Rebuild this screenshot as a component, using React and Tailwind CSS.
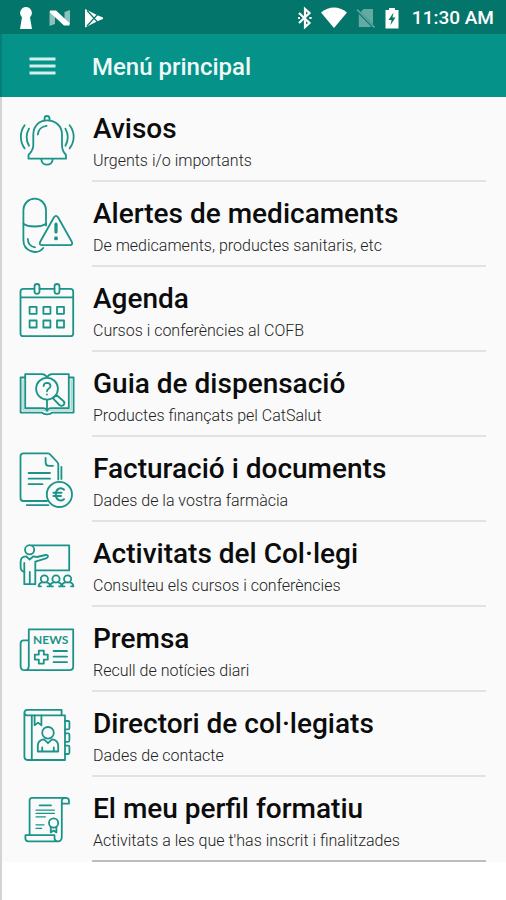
import React from 'react';

const Icon = ({ children }) => (
    <svg
        className="w-15 h-15 shrink-0 text-[#1a9488]"
        viewBox="0 0 60 60"
        fill="none"
        stroke="currentColor"
        strokeWidth="1.8"
        strokeLinecap="round"
        strokeLinejoin="round"
        aria-hidden="true"
    >
        {children}
    </svg>
);

const BellIcon = () => (
    <Icon>
        <path d="M27.5 10.6 V8.5 A2.5 2.5 0 0 1 32.5 8.5 V10.6" />
        <path d="M11.5 48.7 V45 C14 42.5 16.3 39.5 16.3 35 V24.5 C16.3 16 22 10.4 30.2 10.4 C38.5 10.4 45 16 45 24.5 V35 C45 39.5 46.5 42.5 49 45 V48.7 Z" />
        <path d="M24.3 49 C24.3 56.5 35.7 56.5 35.7 49" />
        <path d="M20.8 24.5 C21.2 20 24.6 16.4 29.6 15.9" />
        <path d="M7.6 15.2 C2.6 22 2.6 31.5 7.6 38.4 M12 18.6 C9 24 9 30.5 12 35.8" />
        <path d="M52.6 15.2 C58 22 58 31.5 52.6 38.4 M48.4 18.6 C51.4 24 51.4 30.5 48.4 35.8" />
    </Icon>
);

const PillIcon = () => (
    <Icon>
        <path d="M29 30.5 V15 A11.3 11.3 0 0 0 6.4 15 V45 C6.4 56.5 20 60.5 26.3 53" />
        <path d="M6.4 28.8 C11 32.4 24 32.4 29 28.8" />
        <path d="M10.8 44 C11 48.5 13.8 51.6 18 52.4" />
        <path d="M37 22.3 Q39 19.5 41 22.3 L54.8 46.8 Q56 50 53 50.1 H24.8 Q21.8 50 23.2 46.8 Z" />
        <path d="M39 29.2 V37" strokeWidth="3.2" />
        <path d="M39 43.2 V43.4" strokeWidth="3.8" />
    </Icon>
);

const CalendarIcon = () => (
    <Icon>
        <path d="M17.3 8.8 H6.3 Q3.5 8.8 3.5 11.6 V53.4 Q3.5 56.2 6.3 56.2 H53.4 Q56.2 56.2 56.2 53.4 V11.6 Q56.2 8.8 53.4 8.8 H42.7 M22.5 8.8 H37.5 M3.5 17.4 H56.2" />
        <rect x="17.5" y="4" width="5" height="9.8" rx="2.5" />
        <rect x="37.5" y="4" width="5" height="9.8" rx="2.5" />
        <path d="M12.6 26.8 h7 v7 h-7 z M26.4 26.8 h7 v7 h-7 z M40 26.8 h7 v7 h-7 z M12.6 40.5 h7 v7 h-7 z M26.4 40.5 h7 v7 h-7 z M40 40.5 h7 v7 h-7 z" />
    </Icon>
);

const BookSearchIcon = () => (
    <Icon>
        <path d="M8 12.5 H3.6 V47.6 H25 Q26.5 49.3 30 49.3 Q33.5 49.3 35 47.6 H56.6 V12.5 H52" />
        <path d="M6 15 V45 H26.5 L30 46.8 L33.5 45 H54.2 V15" strokeWidth="1" opacity="0.5" />
        <path d="M30 12.2 Q28 9.2 25 9.2 H8.2 V43.2 H26 Q29 43.2 30 45.5 Q31 43.2 34 43.2 H51.8 V9.2 H35 Q32 9.2 30 12.2" />
        <path d="M30 35 V45" />
        <circle cx="30" cy="23.7" r="10.9" fill="#fafafa" />
        <path d="M26.6 21 Q26.8 17.8 30.2 17.8 Q33.6 18 33.5 21 Q33.3 23 31.3 24 Q30 24.8 30 26.3 M30 29.3 V29.5" />
        <path d="M36 33.4 L39.4 30 L46.4 36 Q48.4 38 46.6 40 Q44.6 41.8 42.4 40 Z" fill="#fafafa" />
    </Icon>
);

const InvoiceIcon = () => (
    <Icon>
        <path d="M30 51 H6.5 Q3.5 51 3.5 48 V6.3 Q3.5 3.4 6.5 3.4 H31 Q32.3 3.4 33.3 4.6 L40.2 12 Q41.3 13.2 41.3 14.7 V29.5" />
        <path d="M28.6 7.8 V12.5 Q28.6 15.8 32 15.8 H36" />
        <path d="M11.6 23 H33 M11.6 28.7 H33 M11.6 34.2 H25.5" />
        <path d="M44.4 17 V29 M9.8 55.1 H31.5" />
        <circle cx="42.4" cy="44.4" r="12.6" />
        <path d="M47 39.6 C43 36.5 38.8 39.3 38.8 44.4 C38.8 49.5 43 52.3 47 49.2 M36.4 42.8 H44.5 M36.4 46 H44" strokeWidth="2" />
    </Icon>
);

const TeacherIcon = () => (
    <Icon>
        <path d="M15 10.4 H52.2 V35.3 H18.6" />
        <circle cx="12.6" cy="14.8" r="4.6" />
        <path d="M7.3 49.2 V37 Q3.6 36 3.6 32 V27 Q3.6 21.3 9 21.3 L12.7 24.5 L16.5 21.3 L20 22 L28.5 20 Q31 19.8 31 21.3 Q31 22.7 29 23.3 L18.3 26.6 V49.2 Z" />
        <path d="M12.8 37 V49 M7.3 28 V37" />
        <circle cx="27.4" cy="43.9" r="3.6" />
        <circle cx="39" cy="43.9" r="3.6" />
        <circle cx="50.6" cy="43.9" r="3.6" />
        <path d="M21.6 51.3 Q21.8 48 25.5 47.4 M29.3 47.4 Q33 48 33.2 51.3 Q33.4 48 37.1 47.4 M40.9 47.4 Q44.6 48 44.8 51.3 Q45 48 48.7 47.4 M52.5 47.4 Q56.2 48 56.4 51.3 M21.6 51.3 H24 M30.5 51.3 H36 M42 51.3 H47.5 M54 51.3 H56.4" />
    </Icon>
);

const NewsIcon = () => (
    <Icon>
        <path d="M11.8 20.4 H6.8 Q3.6 20.4 3.6 23.6 V46.2 Q3.6 50.2 7.7 50.2 H52.5 Q56.2 50.2 56.2 46.5 V9.4 H11.8 V46.2 Q11.8 50.2 7.7 50.2" />
        <text
            x="16"
            y="24"
            className="font-['Lato',sans-serif] text-[12px] font-bold"
            fill="currentColor"
            stroke="none"
        >
            NEWS
        </text>
        <path d="M21.8 30.6 h5 v4 h4 v5 h-4 v4 h-5 v-4 h-4 v-5 h4 z" />
        <path d="M36.6 31 H50 M36.6 36.7 H50 M36.6 42.2 H50" />
    </Icon>
);

const ContactsIcon = () => (
    <Icon>
        <path d="M44.6 10.2 V4.8 H10.5 Q7.4 4.8 7.4 8 V51.8 Q7.4 55 10.5 55 H48 V10.4 H10 Q7.6 10.2 7.6 8" />
        <path d="M14.8 10.4 V55" />
        <path d="M17.6 10.4 V20.2 L21 17.6 L24.4 20.2 V10.4" />
        <path d="M48 16 h3.2 q1.2 0 1.2 1.2 v6 q0 1.2 -1.2 1.2 h-3.2 M48 28.4 h3.2 q1.2 0 1.2 1.2 v6 q0 1.2 -1.2 1.2 h-3.2 M48 40.6 h3.2 q1.2 0 1.2 1.2 v6 q0 1.2 -1.2 1.2 h-3.2" />
        <circle cx="31" cy="27.8" r="5.8" />
        <path d="M20.8 46.5 V41 Q20.8 35 27 34.4 L31 38.2 L35 34.4 Q41.2 35 41.2 41 V46.5 Z M25.2 46 V42.5 M36.8 46 V42.5" />
    </Icon>
);

const DiplomaIcon = () => (
    <Icon>
        <path d="M12.6 45 V10.4 Q12.6 7.8 15.2 7.8 H48.5 Q52 7.8 52 11 V13.6 H44.8 V46.5 Q44.8 51.4 41 51.4 H11.5 Q8.4 51.4 8.4 48.2 V45.2 H37.5 V47.5 Q37.5 51.2 41 51.4" />
        <path d="M44.8 13.6 V10.5 Q45 8 48 7.8" />
        <path d="M22.6 15.4 H34" />
        <path d="M19 20.2 H37.4 M19 23.4 H37.4 M19 26.8 H28.4 M19 34.8 H27 M19 38.4 H24.6" strokeWidth="1.2" />
        <circle cx="36.6" cy="33" r="4.6" />
        <path d="M33.8 37 V42.4 L36.6 40.6 L39.4 42.4 V37" />
    </Icon>
);

const menuItems = [
    { id: 'avisos', title: 'Avisos', subtitle: 'Urgents i/o importants', icon: BellIcon },
    { id: 'alertes', title: 'Alertes de medicaments', subtitle: 'De medicaments, productes sanitaris, etc', icon: PillIcon },
    { id: 'agenda', title: 'Agenda', subtitle: 'Cursos i conferències al COFB', icon: CalendarIcon },
    { id: 'guia', title: 'Guia de dispensació', subtitle: 'Productes finançats pel CatSalut', icon: BookSearchIcon },
    { id: 'facturacio', title: 'Facturació i documents', subtitle: 'Dades de la vostra farmàcia', icon: InvoiceIcon },
    { id: 'activitats', title: 'Activitats del Col·legi', subtitle: 'Consulteu els cursos i conferències', icon: TeacherIcon },
    { id: 'premsa', title: 'Premsa', subtitle: 'Recull de notícies diari', icon: NewsIcon },
    { id: 'directori', title: 'Directori de col·legiats', subtitle: 'Dades de contacte', icon: ContactsIcon },
    { id: 'perfil', title: 'El meu perfil formatiu', subtitle: "Activitats a les que t'has inscrit i finalitzades", icon: DiplomaIcon },
];

const StatusBar = () => (
    <div className="flex h-[34px] items-center justify-between bg-[#04756b] pl-4 pr-3 pt-0.5 text-white">
        <div className="flex items-center gap-3">
            <svg className="w-5 h-6" viewBox="0 0 20 24" fill="currentColor" aria-hidden="true">
                <path d="M10 1 A6 6 0 0 1 14 11.3 L16 23 H4 L6 11.3 A6 6 0 0 1 10 1 Z" />
            </svg>
            <svg className="w-6 h-6" viewBox="0 0 24 24" fill="currentColor" aria-hidden="true">
                <path d="M1.5 5 L7 8 V18 L1.5 20 Z M22 4 V18.5 L16.5 15 V6 Z" opacity="0.55" />
                <path d="M2 4.5 H8 L21.5 17 V19.5 H16 L2 6.5 Z" />
            </svg>
            <svg className="w-5 h-6" viewBox="0 0 20 24" fill="currentColor" aria-hidden="true">
                <path d="M1 3 L14 9.5 L19 11.5 V13 L14 15 L1 21.5 Z" />
                <path d="M3 4.5 L13.5 16 M3 20 L13.5 8.5" stroke="#04756b" strokeWidth="1.2" fill="none" />
            </svg>
        </div>
        <div className="flex items-center">
            <svg className="w-5 h-6 mr-1" viewBox="0 0 20 24" fill="none" stroke="currentColor" strokeWidth="2.2" aria-hidden="true">
                <path d="M3 7 L13.5 17 L9 21 V3 L13.5 7 L3 17" />
                <path d="M13.3 12 H15.6 M2 12 H4" />
            </svg>
            <svg className="w-7 h-6 mr-2" viewBox="0 0 28 24" fill="currentColor" aria-hidden="true">
                <path d="M1 6.5 Q14 -3.5 27 6.5 L14 22 Z" />
            </svg>
            <svg className="w-5 h-6 mr-2" viewBox="0 0 20 24" fill="currentColor" opacity="0.38" aria-hidden="true">
                <path d="M7.5 3 H17 V18.5 L4.8 6 Z M2.8 8 L15.5 21 H2.8 Z" />
                <path d="M1 3.5 L18.5 21.5" stroke="currentColor" strokeWidth="1.6" />
            </svg>
            <svg className="w-4 h-6 mr-2" viewBox="0 0 16 24" aria-hidden="true">
                <path d="M5 2 H11 V4 H14.5 V22.5 H1.5 V4 H5 Z" fill="currentColor" />
                <path d="M9.5 6.5 L4.5 14 H7.5 L6.5 19 L11.5 11.5 H8.5 Z" fill="#04756b" />
            </svg>
            <span className="pl-1 text-[19px] font-medium">11:30 AM</span>
        </div>
    </div>
);

const MenuRow = ({ item, last }) => {
    const ItemIcon = item.icon;
    return (
        <li>
            <a href={`#${item.id}`} className="flex h-[85px] items-center gap-[15px] pl-[15px] pr-5">
                <ItemIcon />
                <div
                    className={`flex h-full min-w-0 flex-1 flex-col justify-end pb-[3px] pl-px ${
                        last ? 'border-b-2 border-[#bdbdbd]' : 'border-b-2 border-[#e2e2e2]'
                    }`}
                >
                    <h2 className="text-[28px] leading-8 font-medium text-[#0c0c0c]">{item.title}</h2>
                    <p className="text-base leading-8 font-light text-[#222222]">{item.subtitle}</p>
                </div>
            </a>
        </li>
    );
};

const App = () => {
    return (
        <div className="min-h-screen bg-white font-['Roboto',sans-serif]">
            <StatusBar />

            {/* Barra superior */}
            <header className="flex h-[63px] items-center border-l-2 border-[#047f75] bg-[#059288] pl-6 pt-0.5">
                <button type="button" aria-label="Obrir menú" className="mr-[34px] text-[#d2efec]">
                    <svg className="w-8 h-6" viewBox="0 0 32 24" stroke="currentColor" strokeWidth="2.8" aria-hidden="true">
                        <path d="M3.5 4 H29.5 M3.5 11 H29.5 M3.5 18 H29.5" />
                    </svg>
                </button>
                <h1 className="text-2xl font-medium text-[#eefaf8]">Menú principal</h1>
            </header>

            {/* Llista d'opcions */}
            <main className="border-l-2 border-[#d4d4d4] pb-[38px]">
                <ul className="bg-[#fafafa]">
                    {menuItems.map((item, index) => (
                        <MenuRow key={item.id} item={item} last={index === menuItems.length - 1} />
                    ))}
                </ul>
            </main>
        </div>
    );
};

export default App;
